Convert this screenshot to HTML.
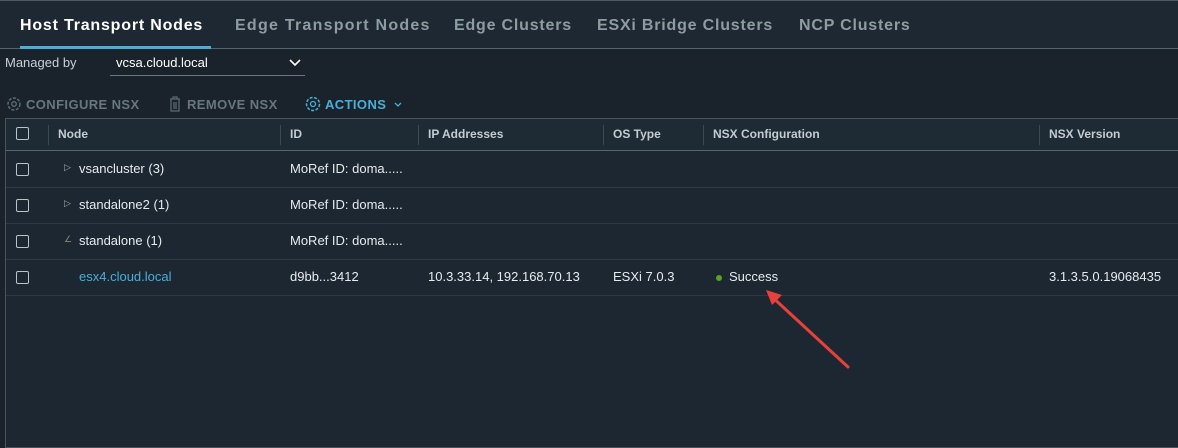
<!DOCTYPE html>
<html><head><meta charset="utf-8"><style>
*{margin:0;padding:0;box-sizing:border-box}
body{width:1178px;height:438px;overflow:hidden;background:#1a232b;font-family:"Liberation Sans",sans-serif;position:relative;color:#e3e8eb}
.abs{position:absolute;white-space:nowrap}
.tabs{position:absolute;left:0;top:0;width:1178px;height:49px;background:#1e2832;border-top:1px solid #4e5a63;border-bottom:1px solid #56636c}
.tab{position:absolute;top:16px;font-size:16px;font-weight:bold;letter-spacing:0.8px;color:#8f9ba3}
.table{position:absolute;left:5px;top:118px;width:1180px;height:330px;background:#1c2731;border:1px solid #48545d}
.hdr{position:absolute;left:0;top:0;width:100%;height:32px;background:#1e2a34;border-bottom:1px solid #5a666f}
.hc{position:absolute;top:8px;font-size:12px;font-weight:bold;color:#c2ccd2}
.sep{position:absolute;top:6px;width:1px;height:20px;background:#3d4953}
.row{position:absolute;left:0;width:100%;height:37px;border-bottom:1px solid #2d3a44}
.cb{position:absolute;left:10px;width:13px;height:13px;border:1.5px solid #b9c3c9;border-radius:2px}
.c{position:absolute;font-size:13px;color:#e6ebee}
</style></head><body>
<div class="tabs">
 <div class="tab" style="left:20px;color:#fff">Host Transport Nodes</div>
 <div class="tab" style="left:235px;letter-spacing:1.25px">Edge Transport Nodes</div>
 <div class="tab" style="left:454px">Edge Clusters</div>
 <div class="tab" style="left:597px">ESXi Bridge Clusters</div>
 <div class="tab" style="left:799px">NCP Clusters</div>
 <div style="position:absolute;left:20px;top:45px;width:191px;height:3px;background:#49afd9"></div>
</div>
<div class="abs" style="left:5px;top:55px;font-size:13px;color:#c7d0d5">Managed by</div>
<div class="abs" style="left:116px;top:55px;font-size:13px;color:#fff">vcsa.cloud.local</div>
<svg class="abs" style="left:289px;top:59px" width="12" height="8"><path d="M1 1 L6 6 L11 1" stroke="#fff" stroke-width="1.6" fill="none"/></svg>
<div class="abs" style="left:110px;top:75px;width:195px;height:1px;background:#6b777f"></div>
<svg class="abs" style="left:5px;top:95px" width="18" height="18"><circle cx="9" cy="9" r="6" stroke="#5f6a72" stroke-width="1.5" fill="none" stroke-dasharray="3 1.5"/><circle cx="9" cy="9" r="2.3" stroke="#5f6a72" stroke-width="1.3" fill="none"/></svg>
<div class="abs" style="left:26px;top:97px;font-size:13px;font-weight:bold;letter-spacing:0.4px;color:#6a757d">CONFIGURE NSX</div>
<svg class="abs" style="left:168px;top:96px" width="14" height="16"><path d="M2 3h10M5 3V1h4v2M3 3v12h8V3M6 6v7M8 6v7" stroke="#5f6a72" stroke-width="1.2" fill="none"/></svg>
<div class="abs" style="left:187px;top:97px;font-size:13px;font-weight:bold;letter-spacing:0.4px;color:#6a757d">REMOVE NSX</div>
<svg class="abs" style="left:304px;top:95px" width="18" height="18"><circle cx="9" cy="9" r="6.5" stroke="#49afd9" stroke-width="1.5" fill="none" stroke-dasharray="3 1.5"/><circle cx="9" cy="9" r="2.5" stroke="#49afd9" stroke-width="1.3" fill="none"/></svg>
<div class="abs" style="left:325px;top:97px;font-size:13px;font-weight:bold;letter-spacing:0.4px;color:#49afd9">ACTIONS</div>
<svg class="abs" style="left:394px;top:102px" width="8" height="6"><path d="M1 1L4 4L7 1" stroke="#49afd9" stroke-width="1.3" fill="none"/></svg>
<div class="table">
 <div class="hdr">
  <div class="cb" style="top:8px"></div>
  <div class="sep" style="left:42px"></div>
  <div class="hc" style="left:52px">Node</div>
  <div class="sep" style="left:274px"></div>
  <div class="hc" style="left:284px">ID</div>
  <div class="sep" style="left:412px"></div>
  <div class="hc" style="left:422px">IP Addresses</div>
  <div class="sep" style="left:597px"></div>
  <div class="hc" style="left:607px">OS Type</div>
  <div class="sep" style="left:697px"></div>
  <div class="hc" style="left:707px">NSX Configuration</div>
  <div class="sep" style="left:1033px"></div>
  <div class="hc" style="left:1043px">NSX Version</div>
 </div>
 <div class="row" style="top:32px"><div class="cb" style="top:12px"></div><div class="c" style="left:58px;top:11px;font-size:9px;color:#aaa">&#9655;</div><div class="c" style="left:73px;top:10px">vsancluster (3)</div><div class="c" style="left:284px;top:10px">MoRef ID: doma.....</div></div>
 <div class="row" style="top:68px"><div class="cb" style="top:12px"></div><div class="c" style="left:58px;top:11px;font-size:9px;color:#aaa">&#9655;</div><div class="c" style="left:73px;top:10px">standalone2 (1)</div><div class="c" style="left:284px;top:10px">MoRef ID: doma.....</div></div>
 <div class="row" style="top:104px"><div class="cb" style="top:12px"></div><div class="c" style="left:58px;top:11px;font-size:9px;color:#888">&#8736;</div><div class="c" style="left:73px;top:10px">standalone (1)</div><div class="c" style="left:284px;top:10px">MoRef ID: doma.....</div></div>
 <div class="row" style="top:140px"><div class="cb" style="top:12px"></div><div class="c" style="left:73px;top:10px;color:#49afd9">esx4.cloud.local</div><div class="c" style="left:284px;top:10px">d9bb...3412</div><div class="c" style="left:422px;top:10px">10.3.33.14, 192.168.70.13</div><div class="c" style="left:607px;top:10px">ESXi 7.0.3</div><div style="position:absolute;left:710px;top:16px;width:6px;height:6px;border-radius:50%;background:#5aa220"></div><div class="c" style="left:723px;top:10px">Success</div><div class="c" style="left:1043px;top:10px">3.1.3.5.0.19068435</div></div>
</div>
<svg class="abs" style="left:760px;top:285px" width="100" height="90"><path d="M88 82 L10 10" stroke="#e8413c" stroke-width="3" stroke-linecap="round"/><path d="M6 5 L22 10 L12 20 Z" fill="#e8413c"/></svg>
</body></html>
